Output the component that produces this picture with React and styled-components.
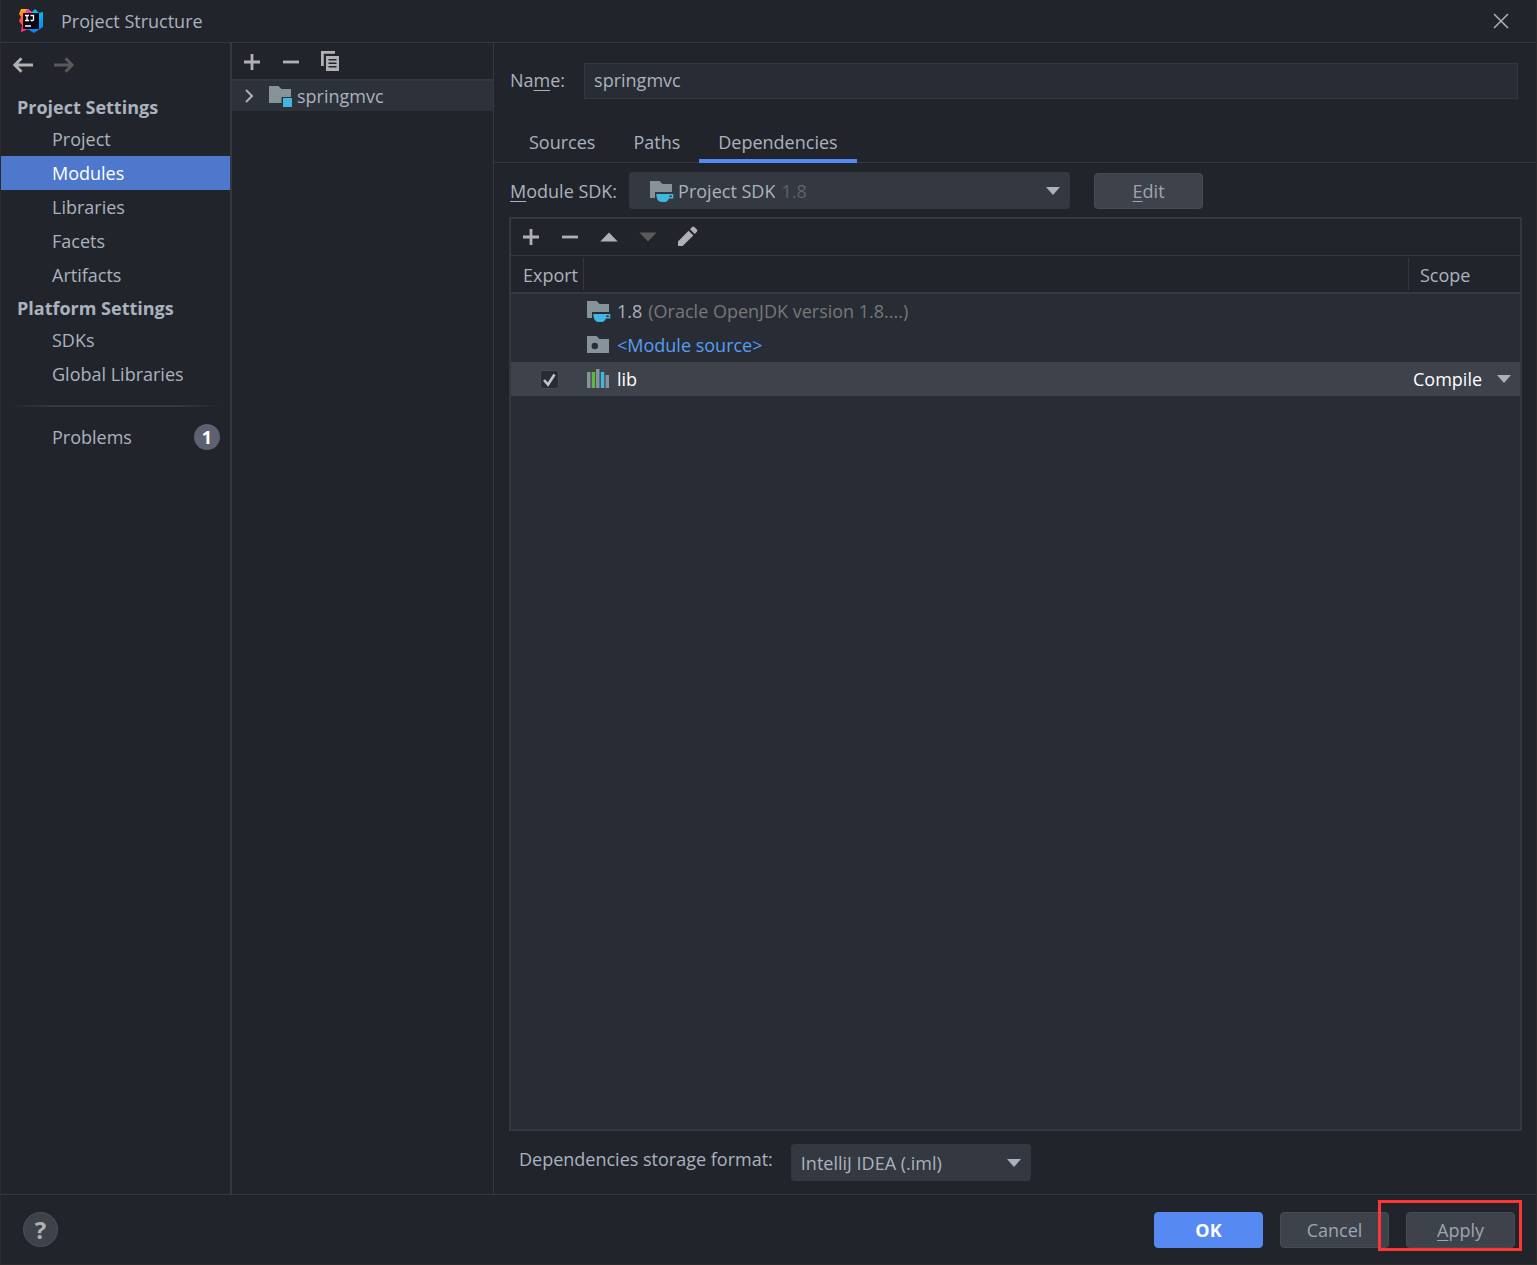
/**
 * Project Structure dialog - module dependencies page
 */
import { useState } from "react";
import styled, { createGlobalStyle } from "styled-components";

const GlobalStyle = createGlobalStyle`
  :root {
    --bg: #21252b;
    --bg-content: #282c34;
    --bg-field: #333841;
    --bg-button: #3d424b;
    --border: #333841;
    --text: #abb2bf;
    --text-muted: #5c6370;
    --icon: #afb1b3;
    --folder: #87939a;
    --cyan: #40b6e0;
    --accent: #568af2;
  }

  * {
    box-sizing: border-box;
  }

  body {
    margin: 0;
    background: var(--bg);
  }

  body, button, input, select {
    font-family: "Open Sans", "Noto Sans", sans-serif;
    font-size: 18px;
    line-height: 28px;
    color: var(--text);
  }

  u {
    text-underline-offset: 3px;
  }
`;

const Dialog = styled.div`
  display: flex;
  flex-direction: column;
  min-height: 100vh;
  border: 1px solid #2b2b2b;
  border-top: 0;
`;

const TitleBar = styled.header`
  display: flex;
  align-items: center;
  height: 43px;
  padding: 0 24px 0 17px;
  border-bottom: 1px solid var(--border);
`;

const Title = styled.h1`
  flex: 1;
  margin: 0 0 0 17px;
  font-size: 18px;
  font-weight: 400;
`;

const IconButton = styled.button`
  display: flex;
  padding: 0;
  border: 0;
  background: none;
  color: ${(p) => (p.disabled ? "#5a5a5a" : "var(--icon)")};
`;

const Body = styled.div`
  flex: 1;
  display: flex;
`;

const Sidebar = styled.aside`
  flex: none;
  width: 231px;
  border-right: 2px solid var(--border);
`;

const History = styled.div`
  display: flex;
  gap: 18px;
  padding: 11px 11px 15px;
`;

const SectionTitle = styled.h2`
  margin: 0;
  padding: 1px 0 0 16px;
  font-size: 18px;
  line-height: 30px;
  font-weight: 700;
`;

const NavItem = styled.a`
  display: flex;
  align-items: center;
  justify-content: space-between;
  height: 34px;
  padding: 0 10px 0 51px;
  color: ${(p) => (p.$active ? "#ffffff" : "inherit")};
  background: ${(p) => (p.$active ? "#4d78cc" : "transparent")};
  text-decoration: none;
`;

const Divider = styled.hr`
  height: 2px;
  margin: 14px 8px 13px;
  border: 0;
  background: linear-gradient(to right, transparent, var(--border) 20%, var(--border) 80%, transparent);
`;

const Badge = styled.span`
  width: 26px;
  height: 26px;
  border-radius: 50%;
  background: #5d6171;
  color: #ffffff;
  font-weight: 700;
  line-height: 26px;
  text-align: center;
`;

const ModuleTree = styled.section`
  flex: none;
  width: 262px;
  border-right: 1px solid var(--border);
`;

const Toolbar = styled.div`
  display: flex;
  align-items: center;
  gap: 17px;
  height: 37px;
  padding: 0 9px;
  border-bottom: 1px solid var(--border);
`;

const TreeToolbar = styled(Toolbar)`
  height: 38px;
  padding-top: 2px;
  border-bottom-width: 2px;
`;

const TreeRow = styled.div`
  display: flex;
  align-items: center;
  height: 30px;
  padding-left: 12px;
  background: #2c313a;
`;

const Content = styled.main`
  flex: 1;
  display: flex;
  flex-direction: column;
  min-width: 0;
`;

const NameRow = styled.div`
  display: flex;
  align-items: center;
  gap: 19px;
  padding: 20px 18px 0 16px;
`;

const FieldLabel = styled.label`
  padding-bottom: ${(p) => p.$lift || 0}px;
`;

const TextInput = styled.input`
  flex: 1;
  height: 36px;
  padding: 0 9px 2px;
  border: 1px solid var(--border);
  background: var(--bg-content);
  outline: none;
`;

const Tabs = styled.div`
  display: flex;
  margin-top: 21px;
  padding-left: 16px;
  border-bottom: 1px solid var(--border);
`;

const Tab = styled.button`
  height: 43px;
  margin-bottom: -1px;
  padding: 4px 19px 0;
  border: 0;
  border-bottom: 4px solid ${(p) => (p.$active ? "var(--accent)" : "transparent")};
  background: none;
`;

const SdkRow = styled.div`
  display: flex;
  align-items: center;
  padding: 9px 16px 8px;
`;

const SelectBox = styled.div`
  display: flex;
  align-items: center;
  width: ${(p) => p.$width}px;
  height: 37px;
  margin-left: ${(p) => p.$gap}px;
  padding: 0 10px;
  border-radius: 4px;
  background: var(--bg-field);
`;

const Select = styled.select`
  appearance: none;
  field-sizing: content;
  padding: 0;
  border: 0;
  background: none;
  outline: none;
  color: ${(p) => p.$color || "inherit"};
`;

const Hint = styled.span`
  color: ${(p) => p.$color || "var(--text-muted)"};
  margin-left: 6px;
`;

const CaretSlot = styled.span`
  display: flex;
  margin-left: auto;
  padding-right: ${(p) => p.$pad || 0}px;
  color: ${(p) => p.$color || "inherit"};
`;

const IconSlot = styled.span`
  display: flex;
  padding: 0 4px 0 ${(p) => p.$indent}px;
`;

const Button = styled.button`
  width: 109px;
  height: 36px;
  padding: 0;
  border: 1px solid ${(p) => (p.$primary ? "var(--accent)" : "#464c55")};
  border-radius: 4px;
  background: ${(p) => (p.$primary ? "var(--accent)" : "var(--bg-button)")};
  color: ${(p) => (p.$primary ? "#ffffff" : "#9da5b4")};
  font-weight: ${(p) => (p.$primary ? 700 : 400)};
`;

const EditSlot = styled.div`
  margin-left: 24px;
`;

const Panel = styled.section`
  flex: 1;
  margin: 0 14px 0 15px;
  border: 2px solid var(--border);
  background: var(--bg-content);
`;

const PanelTools = styled.div`
  background: var(--bg);
`;

const Table = styled.table`
  width: 100%;
  table-layout: fixed;
  border-collapse: separate;
  border-spacing: 0;
`;

const HeadCell = styled.th`
  width: ${(p) => (p.$width ? `${p.$width}px` : "auto")};
  height: 38px;
  padding: 1px 0 0 ${(p) => p.$pad || 0}px;
  border-bottom: 2px solid var(--border);
  background: ${(p) =>
    p.$divided
      ? "linear-gradient(var(--border), var(--border)) left center / 1px 32px no-repeat var(--bg)"
      : "var(--bg)"};
  font-weight: 400;
  text-align: left;
`;

const Row = styled.tr`
  height: 34px;
  background: ${(p) => (p.$selected ? "var(--bg-button)" : "transparent")};
  color: ${(p) => (p.$selected ? "#ffffff" : "var(--text)")};
`;

const Cell = styled.td`
  height: 34px;
  padding: 0 ${(p) => p.$pad || 0}px;
`;

const CellContent = styled.div`
  display: flex;
  align-items: center;
  justify-content: ${(p) => p.$justify || "flex-start"};
`;

const EntryName = styled.span`
  margin-left: 6px;
  color: ${(p) => p.$color || "inherit"};
`;

const Checkbox = styled.input`
  appearance: none;
  width: 19px;
  height: 19px;
  margin: 0 0 0 4px;
  border: 1px solid #464c55;
  border-radius: 3px;
  background: var(--bg-content);

  &:checked {
    background: var(--bg-content)
      url("data:image/svg+xml,%3Csvg xmlns='http://www.w3.org/2000/svg' viewBox='0 0 17 17'%3E%3Cpath d='M3 9l4 4.5L13.500 3.500' fill='none' stroke='%23c0c5d0' stroke-width='2.600'/%3E%3C/svg%3E")
      center / 17px no-repeat;
  }
`;

const FormatRow = styled.div`
  display: flex;
  align-items: center;
  padding: 13px 25px;
`;

const Footer = styled.footer`
  display: flex;
  align-items: center;
  gap: 17px;
  height: 70px;
  padding: 0 21px 0 22px;
  border-top: 1px solid var(--border);
`;

const HelpButton = styled.button`
  width: 35px;
  height: 35px;
  margin-right: auto;
  padding: 0;
  border: 1px solid #4b525c;
  border-radius: 50%;
  background: var(--bg-button);
  color: var(--icon);
  font-size: 24px;
  font-weight: 700;
`;

const Highlighted = styled.div`
  position: relative;

  &::after {
    content: "";
    position: absolute;
    inset: -12px -7px -3px -28px;
    border: 3px solid #ff3535;
    pointer-events: none;
  }
`;

const Icon = ({ size = 22, width, children }) => (
  <svg
    width={width || size}
    height={size}
    viewBox={`0 0 ${width || size} ${size}`}
    fill="currentColor"
    aria-hidden="true"
  >
    {children}
  </svg>
);

const PlusIcon = () => (
  <Icon>
    <path d="M9.600 3h2.800v6.600H19v2.800h-6.600V19H9.600v-6.600H3V9.600h6.600z" />
  </Icon>
);

const MinusIcon = () => (
  <Icon>
    <path d="M3 9.600h16v2.800H3z" />
  </Icon>
);

const CopyIcon = () => (
  <Icon>
    <path d="M2 0h14v2.800H4.800V15H2z" />
    <path fillRule="evenodd" d="M7 5h13v15H7zM9.500 8v1.500h8V8zM9.500 11.500V13h8v-1.500zM9.500 15v1.500h8V15z" />
  </Icon>
);

const UpIcon = () => (
  <Icon>
    <path d="M2.300 15.500L11 6.500l8.700 9z" />
  </Icon>
);

const DownIcon = () => (
  <Icon>
    <path d="M2.300 6.500h17.400L11 15.500z" />
  </Icon>
);

const PencilIcon = () => (
  <Icon>
    <path d="M2 15.500L12.600 4.700l4.700 4.700L6.700 20H2zM14 3.200l2-2a1.800 1.800 0 0 1 2.600 0L20.700 3.300a1.800 1.800 0 0 1 0 2.600l-2 2z" />
  </Icon>
);

const ArrowIcon = ({ flip }) => (
  <Icon>
    <g
      fill="none"
      stroke="currentColor"
      strokeWidth="2.800"
      transform={flip ? "matrix(-1 0 0 1 23 0)" : undefined}
    >
      <path d="M21 11H3M9.500 4.300L2.800 11 9.500 17.700" />
    </g>
  </Icon>
);

const ChevronIcon = () => (
  <Icon size={16} width={10}>
    <path d="M2 2l6 6-6 6" fill="none" stroke="currentColor" strokeWidth="2" />
  </Icon>
);

const CloseIcon = () => (
  <Icon size={22}>
    <path d="M4 4l14 14M18 4L4 18" fill="none" stroke="currentColor" strokeWidth="1.500" />
  </Icon>
);

const CaretIcon = () => (
  <Icon size={8} width={14}>
    <path d="M0 0h14L7 8z" />
  </Icon>
);

const SdkIcon = () => (
  <Icon width={24}>
    <path d="M0 1h9.500l3 3H22v8H5v6H0z" fill="var(--folder)" />
    <path
      d="M6.300 14H23.300v4.500h-4.300c-1 2.200-2.300 3.500-4 3.500h-3.500c-3 0-5.200-3-5.200-8zM19.300 15.400v1.600h2.500v-1.600z"
      fill="var(--cyan)"
      fillRule="evenodd"
    />
  </Icon>
);

const ModuleIcon = () => (
  <Icon width={24}>
    <path d="M0 1h9.500l3 3H22v8h-9.500v6H0z" fill="var(--folder)" />
    <path d="M14 13h9v9h-9z" fill="var(--cyan)" />
  </Icon>
);

const SourceIcon = () => (
  <Icon width={24}>
    <path
      d="M0 2h9.500l3 3H22v14H0zM7.800 8.800a3.200 3.200 0 1 0 0 6.400 3.200 3.200 0 0 0 0-6.400z"
      fill="var(--folder)"
      fillRule="evenodd"
    />
  </Icon>
);

const LibraryIcon = () => (
  <Icon width={24}>
    <path d="M0 4h3.500v16H0zM9 1h3.500v19H9zM18.500 7H22v13h-3.500z" fill="var(--folder)" />
    <path d="M4.700 4h3.500v16H4.700z" fill="#62b543" />
    <path d="M13.800 4h3.500v16h-3.500z" fill="var(--cyan)" />
  </Icon>
);

const AppLogo = () => (
  <svg width="26" height="26" viewBox="0 0 26 26" aria-hidden="true">
    <defs>
      <linearGradient id="warm" x1="0" y1="0" x2="0" y2="1">
        <stop offset="0" stopColor="#fdb60d" />
        <stop offset=".45" stopColor="#ff5a3c" />
        <stop offset="1" stopColor="#fe2857" />
      </linearGradient>
      <linearGradient id="cool" x1="0" y1="0" x2="0" y2="1">
        <stop offset="0" stopColor="#07c3f2" />
        <stop offset="1" stopColor="#087cfa" />
      </linearGradient>
    </defs>
    <path d="M13 5l4-4 4 4 4-1v15l-9 6-7-4z" fill="url(#cool)" />
    <path d="M3 1h7l5 4-5 16-7 3 1-7-3-4 2-4-2-3z" fill="url(#warm)" />
    <path d="M9 1l5 3-2 4-6-1z" fill="#fe2ec0" />
    <path d="M5 18l5 3-7 3z" fill="#ff318c" />
    <path d="M5 5h16v16H5z" fill="#0b0710" />
    <path
      d="M7 7.500h4M9 7.500v5M7 12.500h4M12.500 7.500h3v4q0 1-1 1h-2M7 18h6"
      fill="none"
      stroke="#ffffff"
      strokeWidth="1.300"
    />
  </svg>
);

const PROJECT_ITEMS = ["Project", "Modules", "Libraries", "Facets", "Artifacts"];
const PLATFORM_ITEMS = ["SDKs", "Global Libraries"];
const TABS = ["Sources", "Paths", "Dependencies"];

export default function App() {
  const [page, setPage] = useState("Modules");
  const [tab, setTab] = useState("Dependencies");
  const [name, setName] = useState("springmvc");
  const [exported, setExported] = useState(true);

  const renderItem = (item) => (
    <NavItem key={item} href="#" $active={item === page} onClick={() => setPage(item)}>
      {item}
    </NavItem>
  );

  return (
    <Dialog>
      <GlobalStyle />
      <TitleBar>
        <AppLogo />
        <Title>Project Structure</Title>
        <IconButton aria-label="Close">
          <CloseIcon />
        </IconButton>
      </TitleBar>

      <Body>
        <Sidebar>
          <History>
            <IconButton aria-label="Back">
              <ArrowIcon />
            </IconButton>
            <IconButton aria-label="Forward" disabled>
              <ArrowIcon flip />
            </IconButton>
          </History>
          <nav>
            <SectionTitle>Project Settings</SectionTitle>
            {PROJECT_ITEMS.map(renderItem)}
            <SectionTitle>Platform Settings</SectionTitle>
            {PLATFORM_ITEMS.map(renderItem)}
            <Divider />
            <NavItem href="#">
              Problems
              <Badge>1</Badge>
            </NavItem>
          </nav>
        </Sidebar>

        <ModuleTree>
          <TreeToolbar>
            <IconButton aria-label="Add module">
              <PlusIcon />
            </IconButton>
            <IconButton aria-label="Remove module">
              <MinusIcon />
            </IconButton>
            <IconButton aria-label="Copy module">
              <CopyIcon />
            </IconButton>
          </TreeToolbar>
          <TreeRow>
            <IconButton aria-label="Expand">
              <ChevronIcon />
            </IconButton>
            <IconSlot $indent={15}>
              <ModuleIcon />
            </IconSlot>
            <span>{name}</span>
          </TreeRow>
        </ModuleTree>

        <Content>
          <NameRow>
            <FieldLabel htmlFor="name" $lift={2}>
              Na<u>m</u>e:
            </FieldLabel>
            <TextInput id="name" value={name} onChange={(e) => setName(e.target.value)} />
          </NameRow>

          <Tabs role="tablist">
            {TABS.map((item) => (
              <Tab
                key={item}
                role="tab"
                aria-selected={item === tab}
                $active={item === tab}
                onClick={() => setTab(item)}
              >
                {item}
              </Tab>
            ))}
          </Tabs>

          <SdkRow>
            <FieldLabel htmlFor="sdk">
              <u>M</u>odule SDK:
            </FieldLabel>
            <SelectBox $width={441} $gap={12}>
              <IconSlot $indent={11}>
                <SdkIcon />
              </IconSlot>
              <Select id="sdk">
                <option>Project SDK</option>
              </Select>
              <Hint>1.8</Hint>
              <CaretSlot>
                <CaretIcon />
              </CaretSlot>
            </SelectBox>
            <EditSlot>
              <Button>
                <u>E</u>dit
              </Button>
            </EditSlot>
          </SdkRow>

          <Panel>
            <PanelTools>
              <Toolbar>
                <IconButton aria-label="Add">
                  <PlusIcon />
                </IconButton>
                <IconButton aria-label="Remove">
                  <MinusIcon />
                </IconButton>
                <IconButton aria-label="Move up">
                  <UpIcon />
                </IconButton>
                <IconButton aria-label="Move down" disabled>
                  <DownIcon />
                </IconButton>
                <IconButton aria-label="Edit">
                  <PencilIcon />
                </IconButton>
              </Toolbar>
            </PanelTools>
            <Table>
              <thead>
                <tr>
                  <HeadCell $width={72} $pad={12}>
                    Export
                  </HeadCell>
                  <HeadCell $divided aria-label="Name" />
                  <HeadCell $divided $width={112} $pad={12}>
                    Scope
                  </HeadCell>
                </tr>
              </thead>
              <tbody>
                <Row>
                  <Cell />
                  <Cell $pad={4}>
                    <CellContent>
                      <SdkIcon />
                      <EntryName>1.8</EntryName>
                      <Hint $color="#787878">(Oracle OpenJDK version 1.8....)</Hint>
                    </CellContent>
                  </Cell>
                  <Cell />
                </Row>
                <Row>
                  <Cell />
                  <Cell $pad={4}>
                    <CellContent>
                      <SourceIcon />
                      <EntryName $color="#589df6">&lt;Module source&gt;</EntryName>
                    </CellContent>
                  </Cell>
                  <Cell />
                </Row>
                <Row $selected>
                  <Cell>
                    <CellContent $justify="center">
                      <Checkbox
                        type="checkbox"
                        aria-label="Export lib"
                        checked={exported}
                        onChange={(e) => setExported(e.target.checked)}
                      />
                    </CellContent>
                  </Cell>
                  <Cell $pad={4}>
                    <CellContent>
                      <LibraryIcon />
                      <EntryName>lib</EntryName>
                    </CellContent>
                  </Cell>
                  <Cell $pad={5}>
                    <CellContent>
                      <Select aria-label="Scope" $color="#ffffff">
                        <option>Compile</option>
                      </Select>
                      <CaretSlot $pad={4} $color="var(--icon)">
                        <CaretIcon />
                      </CaretSlot>
                    </CellContent>
                  </Cell>
                </Row>
              </tbody>
            </Table>
          </Panel>

          <FormatRow>
            <FieldLabel htmlFor="format" $lift={8}>
              Dependencies storage format:
            </FieldLabel>
            <SelectBox $width={240} $gap={18}>
              <Select id="format">
                <option>IntelliJ IDEA (.iml)</option>
              </Select>
              <CaretSlot>
                <CaretIcon />
              </CaretSlot>
            </SelectBox>
          </FormatRow>
        </Content>
      </Body>

      <Footer>
        <HelpButton aria-label="Help">?</HelpButton>
        <Button $primary>OK</Button>
        <Button>Cancel</Button>
        <Highlighted>
          <Button>
            <u>A</u>pply
          </Button>
        </Highlighted>
      </Footer>
    </Dialog>
  );
}
